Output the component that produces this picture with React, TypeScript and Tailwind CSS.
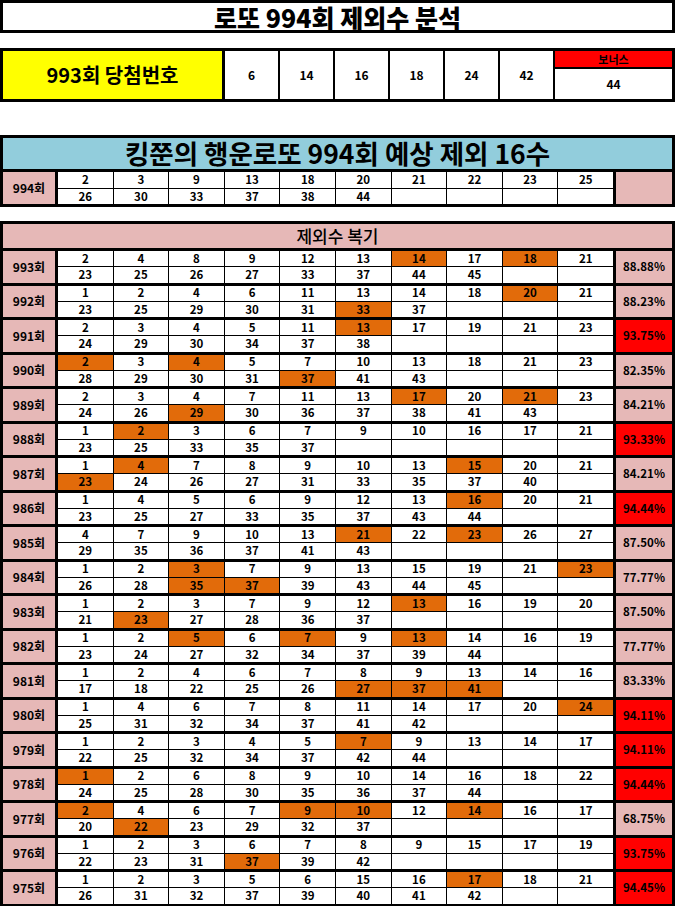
type Round = {
  no: number;
  top: number[];
  bottom: number[];
  hit: number[];
  pct: string;
  red: boolean;
};

const rounds: Round[] = [
  { no: 993, top: [2, 4, 8, 9, 12, 13, 14, 17, 18, 21], bottom: [23, 25, 26, 27, 33, 37, 44, 45], hit: [14, 18], pct: '88.88%', red: false },
  { no: 992, top: [1, 2, 4, 6, 11, 13, 14, 18, 20, 21], bottom: [23, 25, 29, 30, 31, 33, 37], hit: [20, 33], pct: '88.23%', red: false },
  { no: 991, top: [2, 3, 4, 5, 11, 13, 17, 19, 21, 23], bottom: [24, 29, 30, 34, 37, 38], hit: [13], pct: '93.75%', red: true },
  { no: 990, top: [2, 3, 4, 5, 7, 10, 13, 18, 21, 23], bottom: [28, 29, 30, 31, 37, 41, 43], hit: [2, 4, 37], pct: '82.35%', red: false },
  { no: 989, top: [2, 3, 4, 7, 11, 13, 17, 20, 21, 23], bottom: [24, 26, 29, 30, 36, 37, 38, 41, 43], hit: [17, 21, 29], pct: '84.21%', red: false },
  { no: 988, top: [1, 2, 3, 6, 7, 9, 10, 16, 17, 21], bottom: [23, 25, 33, 35, 37], hit: [2], pct: '93.33%', red: true },
  { no: 987, top: [1, 4, 7, 8, 9, 10, 13, 15, 20, 21], bottom: [23, 24, 26, 27, 31, 33, 35, 37, 40], hit: [4, 15, 23], pct: '84.21%', red: false },
  { no: 986, top: [1, 4, 5, 6, 9, 12, 13, 16, 20, 21], bottom: [23, 25, 27, 33, 35, 37, 43, 44], hit: [16], pct: '94.44%', red: true },
  { no: 985, top: [4, 7, 9, 10, 13, 21, 22, 23, 26, 27], bottom: [29, 35, 36, 37, 41, 43], hit: [21, 23], pct: '87.50%', red: false },
  { no: 984, top: [1, 2, 3, 7, 9, 13, 15, 19, 21, 23], bottom: [26, 28, 35, 37, 39, 43, 44, 45], hit: [3, 23, 35, 37], pct: '77.77%', red: false },
  { no: 983, top: [1, 2, 3, 7, 9, 12, 13, 16, 19, 20], bottom: [21, 23, 27, 28, 36, 37], hit: [13, 23], pct: '87.50%', red: false },
  { no: 982, top: [1, 2, 5, 6, 7, 9, 13, 14, 16, 19], bottom: [23, 24, 27, 32, 34, 37, 39, 44], hit: [5, 7, 13], pct: '77.77%', red: false },
  { no: 981, top: [1, 2, 4, 6, 7, 8, 9, 13, 14, 16], bottom: [17, 18, 22, 25, 26, 27, 37, 41], hit: [27, 37, 41], pct: '83.33%', red: false },
  { no: 980, top: [1, 4, 6, 7, 8, 11, 14, 17, 20, 24], bottom: [25, 31, 32, 34, 37, 41, 42], hit: [24], pct: '94.11%', red: true },
  { no: 979, top: [1, 2, 3, 4, 5, 7, 9, 13, 14, 17], bottom: [22, 25, 32, 34, 37, 42, 44], hit: [7], pct: '94.11%', red: true },
  { no: 978, top: [1, 2, 6, 8, 9, 10, 14, 16, 18, 22], bottom: [24, 25, 28, 30, 35, 36, 37, 44], hit: [1], pct: '94.44%', red: true },
  { no: 977, top: [2, 4, 6, 7, 9, 10, 12, 14, 16, 17], bottom: [20, 22, 23, 29, 32, 37], hit: [2, 9, 10, 14, 22], pct: '68.75%', red: false },
  { no: 976, top: [1, 2, 3, 6, 7, 8, 9, 15, 17, 19], bottom: [22, 23, 31, 37, 39, 42], hit: [37], pct: '93.75%', red: true },
  { no: 975, top: [1, 2, 3, 5, 6, 15, 16, 17, 18, 21], bottom: [26, 31, 32, 37, 39, 40, 41, 42], hit: [17], pct: '94.45%', red: true },
];

const winning = [6, 14, 16, 18, 24, 42];

function pad(list: number[]) {
  const out: (number | null)[] = [...list];
  while (out.length < 10) out.push(null);
  return out;
}

function NumberGrid({ top, bottom, hit }: { top: number[]; bottom: number[]; hit: number[] }) {
  const cells = [...pad(top), ...pad(bottom)];
  return (
    <div className="grid flex-1 grid-cols-10 grid-rows-2 gap-px">
      {cells.map((v, i) => (
        <div
          key={i}
          className={`flex items-center justify-center text-[11.5px] font-bold leading-none ${
            v !== null && hit.includes(v) ? 'bg-[#e26b0a]' : 'bg-white'
          }`}
        >
          {v ?? ''}
        </div>
      ))}
    </div>
  );
}

function RoundRow({ round }: { round: Round }) {
  return (
    <div className="flex h-[31.5px] gap-[3px]">
      <div className="flex w-[52px] items-center justify-center bg-[#e6b8b7] text-[12px] font-bold">
        {round.no}회
      </div>
      <NumberGrid top={round.top} bottom={round.bottom} hit={round.hit} />
      <div
        className={`flex w-[56px] items-center justify-center text-[11.5px] font-bold ${
          round.red ? 'bg-[#ff0000]' : 'bg-[#e6b8b7]'
        }`}
      >
        {round.pct}
      </div>
    </div>
  );
}

export default function App() {
  return (
    <div className="w-[675px] bg-white font-['Noto_Sans_CJK_KR','Noto_Sans',sans-serif] text-black">
      <div className="flex h-[33px] items-center justify-center border-[3px] border-black text-[25px] leading-[26px] font-black">
        로또 994회 제외수 분석
      </div>

      <div className="mt-[15px] flex h-[54px] gap-[2px] bg-black p-[3px]">
        <div className="mr-px flex w-[219px] items-center justify-center bg-[#ffff00] text-[20px] font-bold">
          993회 당첨번호
        </div>
        {winning.map((n) => (
          <div key={n} className="flex w-[53px] items-center justify-center bg-white text-[12px] font-bold">
            {n}
          </div>
        ))}
        <div className="flex flex-1 flex-col gap-[2px]">
          <div className="flex h-[16px] items-center justify-center bg-[#ff0000] text-[11px] font-bold leading-none">
            보너스
          </div>
          <div className="flex flex-1 items-center justify-center bg-white text-[12px] font-bold">44</div>
        </div>
      </div>

      <div className="mt-[33px] flex flex-col gap-[3px] bg-black p-[3px]">
        <div className="flex h-[31px] items-center justify-center bg-[#92cddc] text-[26.5px] leading-none font-bold">
          킹쭌의 행운로또 994회 예상 제외 16수
        </div>
        <div className="flex h-[32px] gap-[3px]">
          <div className="flex w-[52px] items-center justify-center bg-[#e6b8b7] text-[12px] font-bold">994회</div>
          <NumberGrid top={[2, 3, 9, 13, 18, 20, 21, 22, 23, 25]} bottom={[26, 30, 33, 37, 38, 44]} hit={[]} />
          <div className="w-[56px] bg-[#e6b8b7]" />
        </div>
      </div>

      <div className="mt-[14px] flex flex-col gap-[3px] bg-black p-[3px]">
        <div className="flex h-[24px] items-center justify-center bg-[#e6b8b7] text-[17px] font-medium">
          제외수 복기
        </div>
        {rounds.map((r) => (
          <RoundRow key={r.no} round={r} />
        ))}
      </div>
    </div>
  );
}
